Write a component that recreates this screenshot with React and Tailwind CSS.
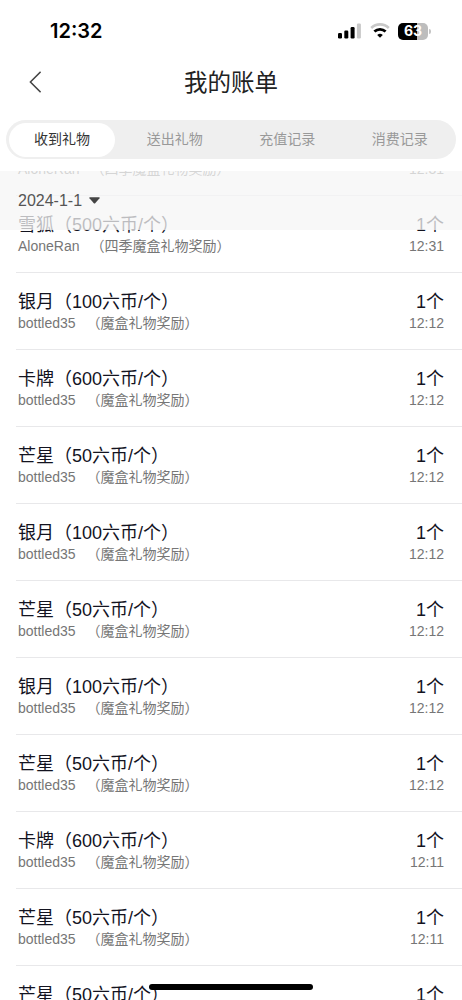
import React from "react";

const tabs = ["收到礼物", "送出礼物", "充值记录", "消费记录"];

const gifts = {
  fox: "雪狐（500六币/个）",
  moon: "银月（100六币/个）",
  card: "卡牌（600六币/个）",
  star: "芒星（50六币/个）",
};

const records = [
  { gift: "fox", user: "AloneRan", source: "（四季魔盒礼物奖励）", time: "12:31" },
  { gift: "moon", user: "bottled35", source: "（魔盒礼物奖励）", time: "12:12" },
  { gift: "card", user: "bottled35", source: "（魔盒礼物奖励）", time: "12:12" },
  { gift: "star", user: "bottled35", source: "（魔盒礼物奖励）", time: "12:12" },
  { gift: "moon", user: "bottled35", source: "（魔盒礼物奖励）", time: "12:12" },
  { gift: "star", user: "bottled35", source: "（魔盒礼物奖励）", time: "12:12" },
  { gift: "moon", user: "bottled35", source: "（魔盒礼物奖励）", time: "12:12" },
  { gift: "star", user: "bottled35", source: "（魔盒礼物奖励）", time: "12:12" },
  { gift: "card", user: "bottled35", source: "（魔盒礼物奖励）", time: "12:11" },
  { gift: "star", user: "bottled35", source: "（魔盒礼物奖励）", time: "12:11" },
  { gift: "star", user: "bottled35", source: "（魔盒礼物奖励）", time: "12:11" },
];

const StatusBar = () => (
  <div className="flex h-[60px] shrink-0 items-center justify-between pl-[50px] pr-[31px] pt-0.5">
    <span className="font-[Inter,sans-serif] text-[20px] font-semibold leading-none text-black">12:32</span>
    <div className="flex items-center">
      <svg className="h-4 w-[23px]" viewBox="0 0 23 16">
        <rect x="0" y="10" width="4" height="5.5" rx="1.2" fill="#000" />
        <rect x="6.3" y="7.5" width="4" height="8" rx="1.2" fill="#000" />
        <rect x="12.6" y="4" width="4" height="11.5" rx="1.2" fill="#000" />
        <rect x="18.9" y="0.5" width="4" height="15" rx="1.2" fill="#c8c8c8" />
      </svg>
      <svg className="ml-[9px] h-4 w-5" viewBox="0 0 20 16">
        <path d="M1.2 5 A12.6 12.6 0 0 1 18.8 5" fill="none" stroke="#c8c8c8" strokeWidth="2.6" />
        <path d="M4.4 8.6 A8.2 8.2 0 0 1 15.6 8.6" fill="none" stroke="#000" strokeWidth="2.8" />
        <path d="M10 14.8 L7.2 12 A4.2 4.2 0 0 1 12.8 12 Z" fill="#000" />
      </svg>
      <div className="ml-2 flex h-[17px] w-[30px] items-center justify-center rounded-[5px] bg-linear-to-r from-black from-62% to-[#bdbdbd] to-62%">
        <span className="font-[Inter,sans-serif] text-[14px] font-bold leading-none text-white">63</span>
      </div>
      <div className="ml-px h-[5px] w-[2px] rounded-r-full bg-[#c4c4c4]" />
    </div>
  </div>
);

const Header = () => (
  <header className="grid h-[44px] shrink-0 grid-cols-[1fr_auto_1fr] items-center">
    <button className="ml-[29px] w-3" aria-label="返回">
      <svg className="h-[22px] w-3" viewBox="0 0 12 22" fill="none" stroke="#444" strokeWidth="1.5">
        <path d="M11.6 0.8 L1.4 11 L11.6 21.2" />
      </svg>
    </button>
    <h1 className="pt-[3px] text-[23.5px] leading-none text-[#222]">我的账单</h1>
  </header>
);

const Tabs = () => (
  <nav className="mx-[6px] mt-4 grid h-[39px] shrink-0 grid-cols-4 rounded-full bg-[#efefef]">
    {tabs.map((tab, i) => (
      <button
        key={tab}
        className={
          i === 0
            ? "my-[2.5px] ml-[3px] mr-[3.5px] rounded-full bg-white pb-px text-[14px] leading-none text-[#333]"
            : "pb-px text-[14px] leading-none text-[#999]"
        }
      >
        {tab}
      </button>
    ))}
  </nav>
);

const RecordMeta = ({ user, source, time }) => (
  <div className="flex justify-between text-[14px] leading-5 text-[#767676]">
    <p className="flex gap-[11px]">
      <span>{user}</span>
      <span>{source}</span>
    </p>
    <p>{time}</p>
  </div>
);

const Record = ({ gift, ...meta }) => (
  <li className="ml-4 h-[77px] border-b border-[#e8e8ea] pl-0.5 pr-[18px] pt-[17px]">
    <div className="flex h-[23px] justify-between text-[18px] leading-6 text-[#13131f]">
      <p>{gifts[gift]}</p>
      <p>1个</p>
    </div>
    <RecordMeta {...meta} />
  </li>
);

const App = () => {
  return (
    <div className="relative flex h-[1000px] w-[462px] flex-col overflow-hidden bg-white font-['Liberation_Sans','Noto_Sans_CJK_SC',sans-serif]">
      <StatusBar />
      <Header />
      <Tabs />
      <main className="relative mt-3 flex-1 overflow-hidden">
        {/* list is scrolled partly under the translucent date bar */}
        <ul className="-mt-3">
          <li className="ml-4 h-[37px] border-b border-[#e8e8ea] pl-0.5 pr-[18px]">
            <RecordMeta user="AloneRan" source="（四季魔盒礼物奖励）" time="12:31" />
          </li>
          {records.map((record, i) => (
            <Record key={i} {...record} />
          ))}
        </ul>
        <div className="absolute inset-x-0 top-0 flex h-[59px] items-center bg-[#f5f5f6]/75 pl-[18px] text-[16px] text-[#555]">
          <span>2024-1-1</span>
          <svg className="ml-[7px] h-[7px] w-[11px]" viewBox="0 0 11 7" fill="#444">
            <path d="M0.8 0.3 H10.2 Q11 0.5 10.5 1.2 L6.2 6.2 Q5.5 6.9 4.8 6.2 L0.5 1.2 Q0 0.5 0.8 0.3 Z" />
          </svg>
        </div>
      </main>
      <div className="absolute bottom-[10px] left-[149px] h-[6px] w-[164px] rounded-full bg-black" />
    </div>
  );
};

export default App;
